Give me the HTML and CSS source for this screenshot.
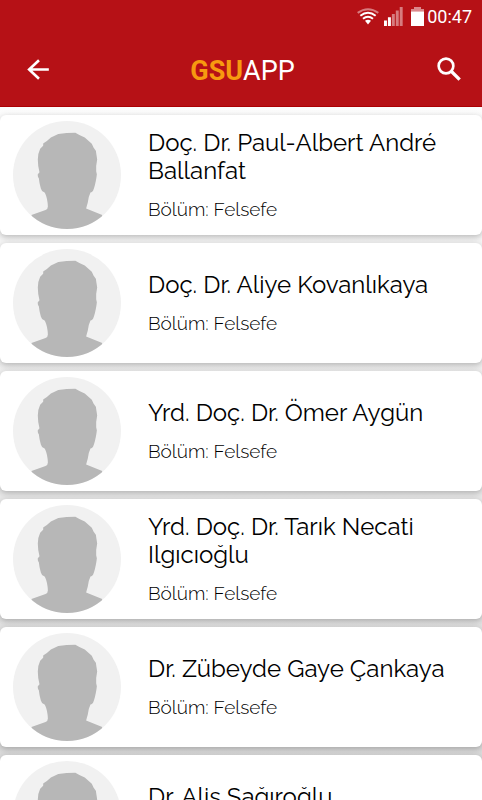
FILE: index.html
```html
<!DOCTYPE html>
<html lang="tr">
<head>
    <meta charset="UTF-8">
    <meta name="viewport" content="width=device-width, initial-scale=1.0">
    <title>GSUAPP</title>
    <link rel="stylesheet" href="styles.css">
</head>
<body>
    <!-- shared avatar -->
    <svg class="sprite" aria-hidden="true">
        <symbol id="avatar" viewBox="40 45 322 322">
            <clipPath id="round"><circle cx="201" cy="206" r="161"/></clipPath>
            <circle cx="201" cy="206" r="161" fill="#f1f1f1"/>
            <path clip-path="url(#round)" fill="#b7b7b7" d="M95 325L137 310Q144 308 144 300Q143 276 136 261Q134 256 130 256Q126 254 123 246Q118 228 117 216Q113 212 114 204L119 198Q114 180 114 160Q114 142 121 128L130 119V112L141 105L153 94L175 84L200 81L226 80L238 87L254 94L275 113L280 124L287 134L291 160L288 179V195L290 204L289 212Q285 238 279 252Q276 258 271 258Q265 270 263 288L258 306L306 325L300 380H100Z"/>
        </symbol>
    </svg>

    <header class="header">
        <div class="status">
            <svg class="wifi" viewBox="0 0 66 50" aria-hidden="true">
                <g fill="none" stroke="#fff" stroke-width="6">
                    <path d="M2 14Q33 -8 64 14" opacity=".45"/>
                    <path d="M10 23Q33 5 56 23"/>
                    <path d="M18 32Q33 20 48 32"/>
                </g>
                <path d="M24 38Q33 31 42 38L33 49Z" fill="#fff"/>
            </svg>
            <svg class="signal" viewBox="0 0 58 58" fill="#fff" aria-hidden="true">
                <path d="M0 41h9v17H0zM12 31h9v27h-9z"/>
                <path d="M24 21h9v37h-9zM36 11h9v47h-9zM48 0h9v58h-9z" opacity=".45"/>
            </svg>
            <svg class="battery" viewBox="0 0 39 57" fill="#fff" aria-hidden="true">
                <path d="M9 0h21v6h9v7H0V6h9z" opacity=".5"/>
                <path d="M0 13h39v44H0z"/>
            </svg>
            <span class="clock">00:47</span>
        </div>
        <div class="toolbar">
            <button class="icon-btn" type="button" aria-label="Geri">
                <svg class="back" viewBox="0 0 66 64" aria-hidden="true">
                    <path d="M36 4L6 32L36 60M5 32H66" fill="none" stroke="#fff" stroke-width="8"/>
                </svg>
            </button>
            <h1 class="title"><span class="accent">GSU</span>APP</h1>
            <button class="icon-btn" type="button" aria-label="Ara">
                <svg class="search" viewBox="0 0 72 72" aria-hidden="true">
                    <circle cx="27" cy="27" r="22" fill="none" stroke="#fff" stroke-width="8"/>
                    <path d="M42 42L68 68" stroke="#fff" stroke-width="10"/>
                </svg>
            </button>
        </div>
    </header>

    <main class="list">
        <article class="card">
            <svg class="avatar" aria-hidden="true"><use href="#avatar"/></svg>
            <div class="info">
                <h2 class="name">Doç. Dr. Paul-Albert André Ballanfat</h2>
                <p class="dept">Bölüm: Felsefe</p>
            </div>
        </article>
        <article class="card">
            <svg class="avatar" aria-hidden="true"><use href="#avatar"/></svg>
            <div class="info">
                <h2 class="name">Doç. Dr. Aliye Kovanlıkaya</h2>
                <p class="dept">Bölüm: Felsefe</p>
            </div>
        </article>
        <article class="card">
            <svg class="avatar" aria-hidden="true"><use href="#avatar"/></svg>
            <div class="info">
                <h2 class="name">Yrd. Doç. Dr. Ömer Aygün</h2>
                <p class="dept">Bölüm: Felsefe</p>
            </div>
        </article>
        <article class="card">
            <svg class="avatar" aria-hidden="true"><use href="#avatar"/></svg>
            <div class="info">
                <h2 class="name">Yrd. Doç. Dr. Tarık Necati Ilgıcıoğlu</h2>
                <p class="dept">Bölüm: Felsefe</p>
            </div>
        </article>
        <article class="card">
            <svg class="avatar" aria-hidden="true"><use href="#avatar"/></svg>
            <div class="info">
                <h2 class="name">Dr. Zübeyde Gaye Çankaya</h2>
                <p class="dept">Bölüm: Felsefe</p>
            </div>
        </article>
        <article class="card">
            <svg class="avatar" aria-hidden="true"><use href="#avatar"/></svg>
            <div class="info">
                <h2 class="name">Dr. Alis Sağıroğlu</h2>
                <p class="dept">Bölüm: Felsefe</p>
            </div>
        </article>
    </main>
</body>
</html>
```
FILE: styles.css
```css
:root {
    --red: #b61116;
    --orange: #f79a10;
}

* {
    box-sizing: border-box;
}

body {
    margin: 0;
    color: #000;
    font-family: Raleway, Lato, sans-serif;
}

/* hide the scrollbar, the list still scrolls */
html {
    scrollbar-width: none;
}

.sprite {
    position: absolute;
    width: 0;
    height: 0;
}

.header {
    background: var(--red);
    border-bottom: 1px solid #ab0004;
    color: white;
    font-family: Roboto, sans-serif;
}

.status {
    display: flex;
    align-items: center;
    justify-content: flex-end;
    height: 32px;
    padding-right: 10px;
}

.wifi {
    width: 22px;
    height: 17px;
    margin-right: 5px;
}

.signal {
    width: 19px;
    height: 19px;
    margin-right: 8px;
}

.battery {
    width: 13px;
    height: 19px;
    margin-right: 3px;
}

.clock {
    padding-top: 2px;
    font-size: 18px;
    line-height: 30px;
}

.toolbar {
    display: flex;
    align-items: center;
    justify-content: space-between;
    height: 74px;
    padding: 0 13px 0 20px;
}

.icon-btn {
    display: flex;
    align-items: center;
    justify-content: center;
    width: 36px;
    height: 40px;
    padding: 0;
    border: 0;
    background: none;
    cursor: pointer;
}

.icon-btn:last-child {
    width: 40px;
}

.back {
    width: 22px;
    height: 21px;
}

.search {
    width: 24px;
    height: 24px;
}

.title {
    margin: 0;
    padding-top: 4px;
    font-size: 27px;
    font-weight: 400;
    line-height: 32px;
}

.accent {
    color: var(--orange);
    font-weight: 700;
}

.list {
    display: flex;
    flex-direction: column;
    gap: 8px;
    padding: 8px 0;
    background: linear-gradient(#fcfcfc, #d4d4d4);
}

.card {
    display: flex;
    align-items: center;
    gap: 27px;
    min-height: 120px;
    padding: 6px 24px 6px 13px;
    border-radius: 6px;
    background: white;
    box-shadow: 0 2px 6px rgba(0, 0, 0, 0.25);
}

.avatar {
    flex: none;
    width: 108px;
    height: 108px;
}

.info {
    flex: 1;
}

.name {
    margin: 0 0 12px;
    font-size: 24px;
    font-weight: 400;
    line-height: 28px;
}

.dept {
    margin: 0;
    font-size: 19px;
    font-weight: 300;
    line-height: 24px;
}
```
